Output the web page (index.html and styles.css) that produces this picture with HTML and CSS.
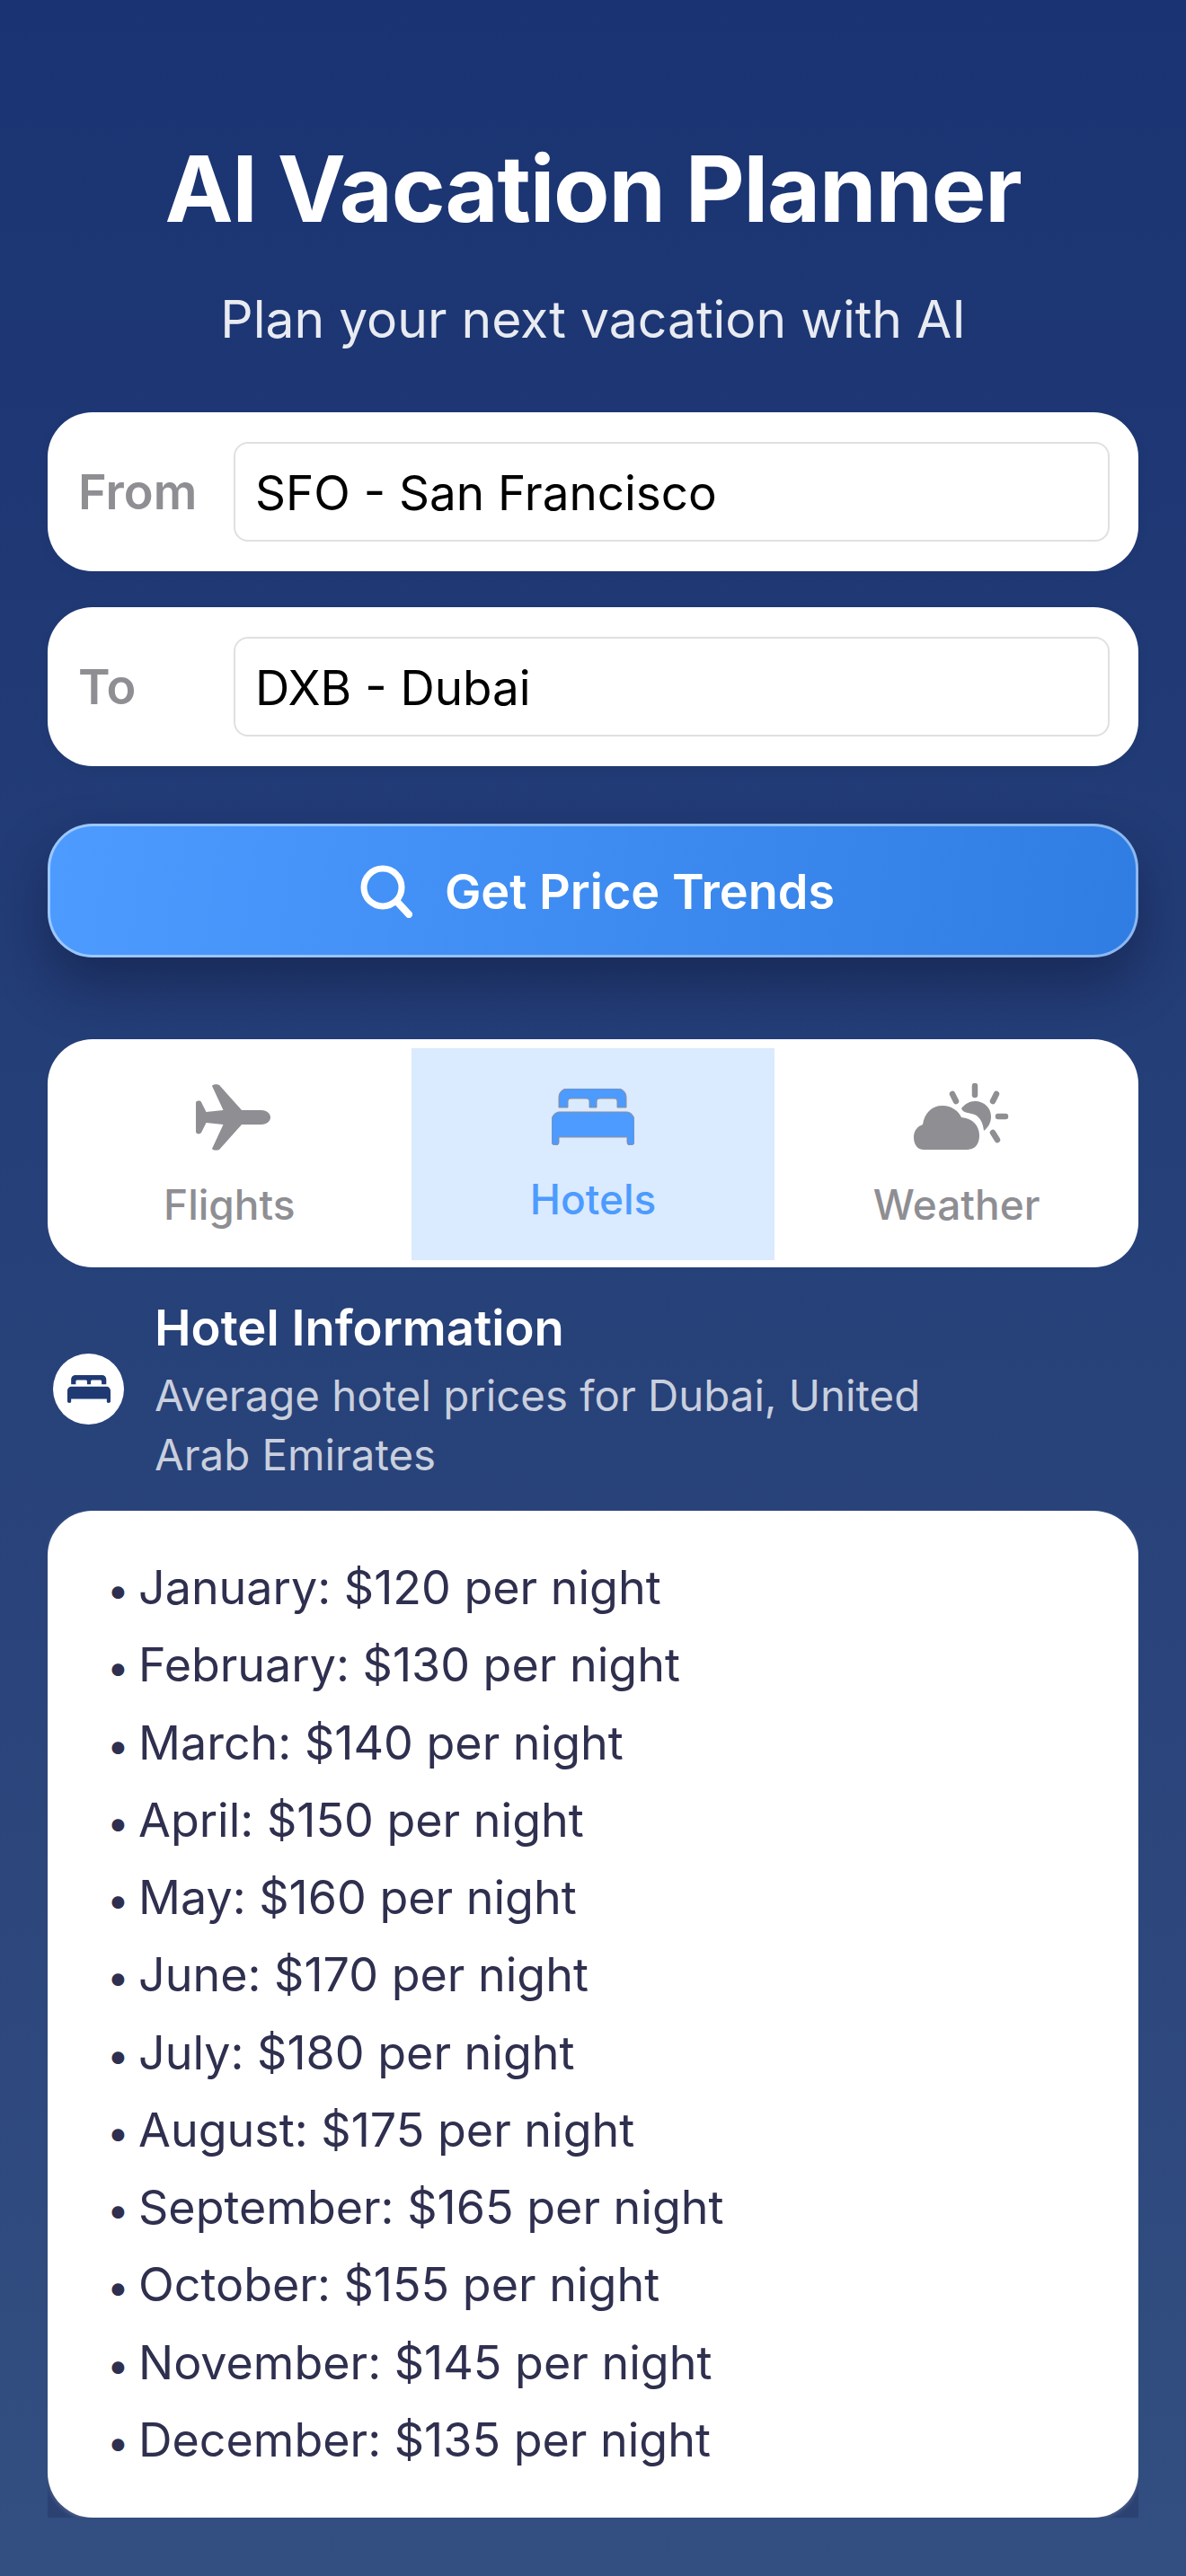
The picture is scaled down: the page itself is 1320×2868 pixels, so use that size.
FILE: index.html
```html
<!DOCTYPE html>
<html lang="en">
<head>
  <meta charset="UTF-8">
  <meta name="viewport" content="width=device-width, initial-scale=1.0">
  <title>AI Vacation Planner</title>
  <link rel="stylesheet" href="styles.css">
</head>
<body>
  <svg class="defs" width="0" height="0">
    <symbol id="bed" viewBox="0 0 92 63" preserveAspectRatio="none">
      <path fill-rule="evenodd" d="M8 21V10C8 4 12 0 18 0H73C79 0 83 4 83 10V21H73V14C73 12 71 11 69 11H54C52 11 50 12 50 14V21H42V14C42 12 40 11 38 11H22C20 11 18 12 18 14V21ZM9 26H83C88 26 92 30 92 36V59C92 62 90 63 88 63C85 63 84 62 84 59V54H8V59C8 62 7 63 4 63C2 63 0 62 0 59V36C0 30 4 26 9 26Z"/>
    </symbol>
  </svg>

  <div class="page">
    <h1 class="title">AI Vacation Planner</h1>
    <p class="subtitle">Plan your next vacation with AI</p>

    <div class="field">
      <label class="field-label">From</label>
      <input class="field-input" type="text" value="SFO - San Francisco">
    </div>
    <div class="field">
      <label class="field-label">To</label>
      <input class="field-input" type="text" value="DXB - Dubai">
    </div>

    <button class="search-btn">
      <svg class="search-icon" viewBox="0 0 58 59" fill="none" stroke="#fff" stroke-linecap="round">
        <circle cx="25" cy="25" r="21" stroke-width="7"/>
        <path d="M41 41L54 55" stroke-width="8"/>
      </svg>
      Get Price Trends
    </button>

    <div class="tabs">
      <div class="tab">
        <svg class="tab-icon plane" viewBox="0 0 83 74">
          <path d="M51 29H73C79 29 83 33 83 37C83 41 79 45 73 45H51L26 73C24 74 19 74 18 72L30.5 45L11.5 43L6 54C5 56 0 56 0 53V21C0 18 5 18 6 20L11.5 31L30.5 29L18 2C19 0 24 0 26 1Z"/>
        </svg>
        <span class="tab-label">Flights</span>
      </div>
      <div class="tab active">
        <svg class="tab-icon bed"><use href="#bed"/></svg>
        <span class="tab-label">Hotels</span>
      </div>
      <div class="tab">
        <svg class="tab-icon cloud" viewBox="0 0 106 75">
          <path d="M11 74C4 74 0 68 0 60C0 53 4 48 10 46C12 33 20 25 32 25C42 25 50 31 53 38C65 39 73 47 73 58C73 68 68 74 59 74Z"/>
          <path d="M53 28C57 23 62 20 68 20C79 20 86 28 86 37C86 44 83 49 78 53C77 45 75 41 72 38C69 34 64 34 60 33C56 32 54 31 53 28Z"/>
          <g fill="none" stroke-width="6.5" stroke-linecap="round">
            <path d="M68 3V13M43 12L47 20M92 12L88 20M94 37H102M88 55L93 63"/>
          </g>
        </svg>
        <span class="tab-label">Weather</span>
      </div>
    </div>

    <div class="section-head">
      <div class="section-badge">
        <svg class="badge-bed"><use href="#bed"/></svg>
      </div>
      <div class="section-text">
        <h2 class="section-title">Hotel Information</h2>
        <p class="section-sub">Average hotel prices for Dubai, United Arab Emirates</p>
      </div>
    </div>

    <div class="result-wrap">
      <ul class="prices">
        <li>January: $120 per night</li>
        <li>February: $130 per night</li>
        <li>March: $140 per night</li>
        <li>April: $150 per night</li>
        <li>May: $160 per night</li>
        <li>June: $170 per night</li>
        <li>July: $180 per night</li>
        <li>August: $175 per night</li>
        <li>September: $165 per night</li>
        <li>October: $155 per night</li>
        <li>November: $145 per night</li>
        <li>December: $135 per night</li>
      </ul>
    </div>
  </div>
</body>
</html>
```

FILE: styles.css
```css
* {
  box-sizing: border-box;
}
body {
  margin: 0;
  height: 2868px;
  font-family: Inter, "Liberation Sans", sans-serif;
  background: linear-gradient(180deg, #1a3372 0%, #334e80 100%);
}
.defs {
  position: absolute;
}
.page {
  padding: 150px 53px 0;
}
.title {
  margin: 0;
  font-size: 102px;
  line-height: 120px;
  font-weight: 700;
  letter-spacing: -1.2px;
  text-align: center;
  color: #fff;
}
.subtitle {
  margin: 51px 0 68px;
  font-size: 57px;
  line-height: 70px;
  text-align: center;
  color: rgba(255,255,255,0.9);
}
.field {
  display: flex;
  align-items: center;
  height: 177px;
  margin-bottom: 40px;
  padding: 0 32px 0 34px;
  background: #fff;
  border-radius: 50px;
  box-shadow: 0 4px 12px rgba(0,0,0,0.05);
}
.field-label {
  width: 173px;
  font-size: 54px;
  font-weight: 600;
  color: #8e8e93;
}
.field-input {
  flex: 1;
  height: 111px;
  padding: 2px 22px 0 22px;
  font-family: inherit;
  font-size: 53px;
  color: #000;
  background: #fff;
  border: 2px solid #e0e0e3;
  border-radius: 16px;
  outline: none;
}
.search-btn {
  display: flex;
  align-items: center;
  justify-content: center;
  gap: 36px;
  width: 100%;
  height: 149px;
  margin-top: 64px;
  padding: 2px 0 0 10px;
  font-family: inherit;
  font-size: 54px;
  font-weight: 600;
  color: #fff;
  background: linear-gradient(100deg, #4d9bff 0%, #2f7de3 100%);
  border: 3px solid rgba(255,255,255,0.45);
  background-origin: border-box;
  border-radius: 50px;
  box-shadow: 0 30px 60px rgba(10,20,50,0.45);
}
.search-icon {
  width: 58px;
  height: 59px;
}
.tabs {
  display: grid;
  grid-template-columns: repeat(3, 1fr);
  height: 254px;
  margin-top: 91px;
  padding: 10px 0 8px;
  background: #fff;
  border-radius: 50px;
}
.tab {
  display: flex;
  flex-direction: column;
  align-items: center;
  justify-content: center;
  gap: 33px;
  padding-top: 4px;
  color: #8e8e93;
  fill: #8e8e93;
  stroke: #8e8e93;
  font-size: 46px;
}
.tab svg path {
  stroke: none;
}
.tab svg g path {
  stroke: inherit;
}
.tab.active {
  color: #4d9bff;
  fill: #4d9bff;
  background: #daeaff;
}
.tab-label {
  line-height: 54px;
  font-weight: 450;
}
.tab-icon.plane {
  width: 83px;
  height: 74px;
  margin-left: 8px;
}
.tab-icon.bed {
  width: 92px;
  height: 63px;
}
.tab-icon.cloud {
  width: 106px;
  height: 75px;
  margin-left: 10px;
}
.section-head {
  display: flex;
  align-items: center;
  gap: 34px;
  margin-top: 34px;
  padding-left: 6px;
}
.section-badge {
  flex: none;
  display: flex;
  align-items: center;
  justify-content: center;
  width: 79px;
  height: 79px;
  margin-bottom: 6px;
  background: #fff;
  border-radius: 50%;
}
.badge-bed {
  width: 48px;
  height: 31px;
  fill: #1f3a73;
}
.section-title {
  margin: 0 0 10px;
  font-size: 54.4px;
  line-height: 66px;
  font-weight: 600;
  color: #fff;
}
.section-sub {
  margin: 0;
  max-width: 900px;
  font-size: 47.4px;
  line-height: 66px;
  color: rgba(255,255,255,0.75);
}
/* only the lower corners show a square backing in the reference */
.result-wrap {
  margin-top: 29px;
  overflow: hidden;
  background: linear-gradient(180deg, transparent calc(100% - 60px), rgba(38,56,104,0.55) 0);
}
.prices {
  margin: 0;
  padding: 43px 0 43px 66px;
  list-style: none;
  background: #fff;
  border-radius: 50px;
  box-shadow: 0 2px 5px rgba(255,255,255,0.18);
  font-size: 52px;
  color: #2f2f4f;
}
.prices li {
  height: 86.25px;
  line-height: 86px;
}
.prices li::before {
  content: "•";
  display: inline-block;
  width: 35px;
  font-size: 44px;
  line-height: 1;
}
```
